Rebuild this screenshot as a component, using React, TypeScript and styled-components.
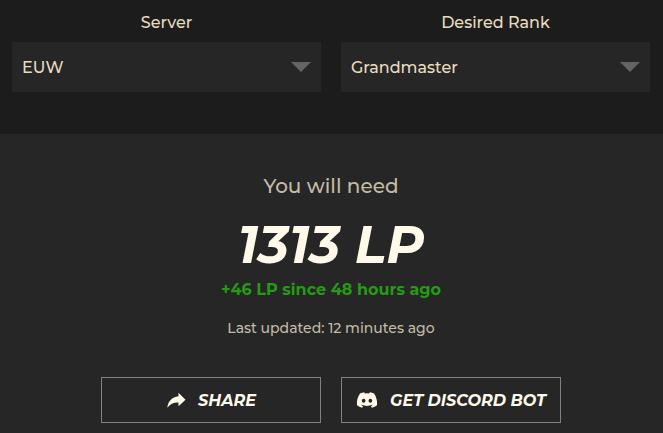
import React from "react";
import styled, { createGlobalStyle } from "styled-components";
import { FaDiscord } from "react-icons/fa";

const GlobalStyle = createGlobalStyle`
  *, *::before, *::after { box-sizing: border-box; }
  body {
    margin: 0;
    background: #262626;
    color: #e8dcc0;
    font-family: Montserrat, Inter, sans-serif;
    font-size: 16px;
    font-weight: 500;
    line-height: 22px;
  }
`;

const Filters = styled.form`
  display: grid;
  grid-template-columns: 1fr 1fr;
  gap: 20px;
  padding: 12px 13px 42px 12px;
  background: #1c1c1c;
`;

const Field = styled.div`
  display: flex;
  flex-direction: column;
  gap: 8px;
`;

const Label = styled.label`
  text-align: center;
`;

const SelectBox = styled.div`
  display: grid;
  align-items: center;
  background: #262626;

  > * { grid-area: 1 / 1; }
`;

const Select = styled.select`
  width: 100%;
  height: 50px;
  padding: 2px 40px 0 10px;
  appearance: none;
  border: 0;
  border-radius: 0;
  background: transparent;
  color: inherit;
  font: inherit;
`;

const Arrow = styled.svg`
  justify-self: end;
  margin-right: 10px;
  pointer-events: none;
  fill: #646464;
`;

const Result = styled.main`
  display: flex;
  flex-direction: column;
  align-items: center;
  padding: 40px 13px 10px 12px;
  text-align: center;
`;

const Intro = styled.p`
  margin: 0;
  color: #c2bba6;
  font-size: 20px;
  line-height: 24px;
`;

const Total = styled.h1`
  margin: 17px 0 4px;
  color: #fff9ea;
  font-size: 52px;
  font-style: italic;
  font-weight: 700;
  line-height: 60px;
`;

const Change = styled.p`
  margin: 0;
  color: #249b12;
  font-weight: 700;
`;

const Updated = styled.p`
  margin: 18px 0 40px;
  color: #c2bba6;
  font-size: 14px;
  line-height: 18px;
`;

const Actions = styled.div`
  display: flex;
  justify-content: center;
  flex-wrap: wrap;
  gap: 20px;
`;

const ActionButton = styled.button`
  display: flex;
  align-items: center;
  justify-content: center;
  gap: 12px;
  width: 220px;
  height: 46px;
  padding: 0;
  border: 1px solid #808080;
  background: transparent;
  color: #fff9ea;
  font: italic 700 16px/22px Montserrat, Inter, sans-serif;
  white-space: nowrap;
  cursor: pointer;
`;

const ActionLabel = styled.span`
  padding-top: 2px;
`;

function SelectField({ id, label, options }: { id: string; label: string; options: string[] }) {
  return (
    <Field>
      <Label htmlFor={id}>{label}</Label>
      <SelectBox>
        <Select id={id} defaultValue={options[0]}>
          {options.map((option) => <option key={option}>{option}</option>)}
        </Select>
        <Arrow width="20" height="10" viewBox="0 0 20 10" aria-hidden="true">
          <path d="M0 0H20L10 10Z" />
        </Arrow>
      </SelectBox>
    </Field>
  );
}

export default function App() {
  return (
    <>
      <GlobalStyle />
      <Filters>
        <SelectField id="server" label="Server" options={["EUW"]} />
        <SelectField id="rank" label="Desired Rank" options={["Grandmaster"]} />
      </Filters>
      <Result>
        <Intro>You will need</Intro>
        <Total>1313 LP</Total>
        <Change>+46 LP since 48 hours ago</Change>
        <Updated>Last updated: 12 minutes ago</Updated>
        <Actions>
          <ActionButton type="button">
            <svg width="20" height="16" viewBox="0 0 20 16" fill="currentColor" aria-hidden="true">
              <path d="M12.500 0.700L19.500 7.700L12.500 14.300V10.500C7.500 10.300 4.200 12 1.300 15.700C2 9.500 5.800 5 12.500 4.300Z" />
            </svg>
            <ActionLabel>SHARE</ActionLabel>
          </ActionButton>
          <ActionButton type="button">
            <FaDiscord size={22} aria-hidden="true" />
            <ActionLabel>GET DISCORD BOT</ActionLabel>
          </ActionButton>
        </Actions>
      </Result>
    </>
  );
}
